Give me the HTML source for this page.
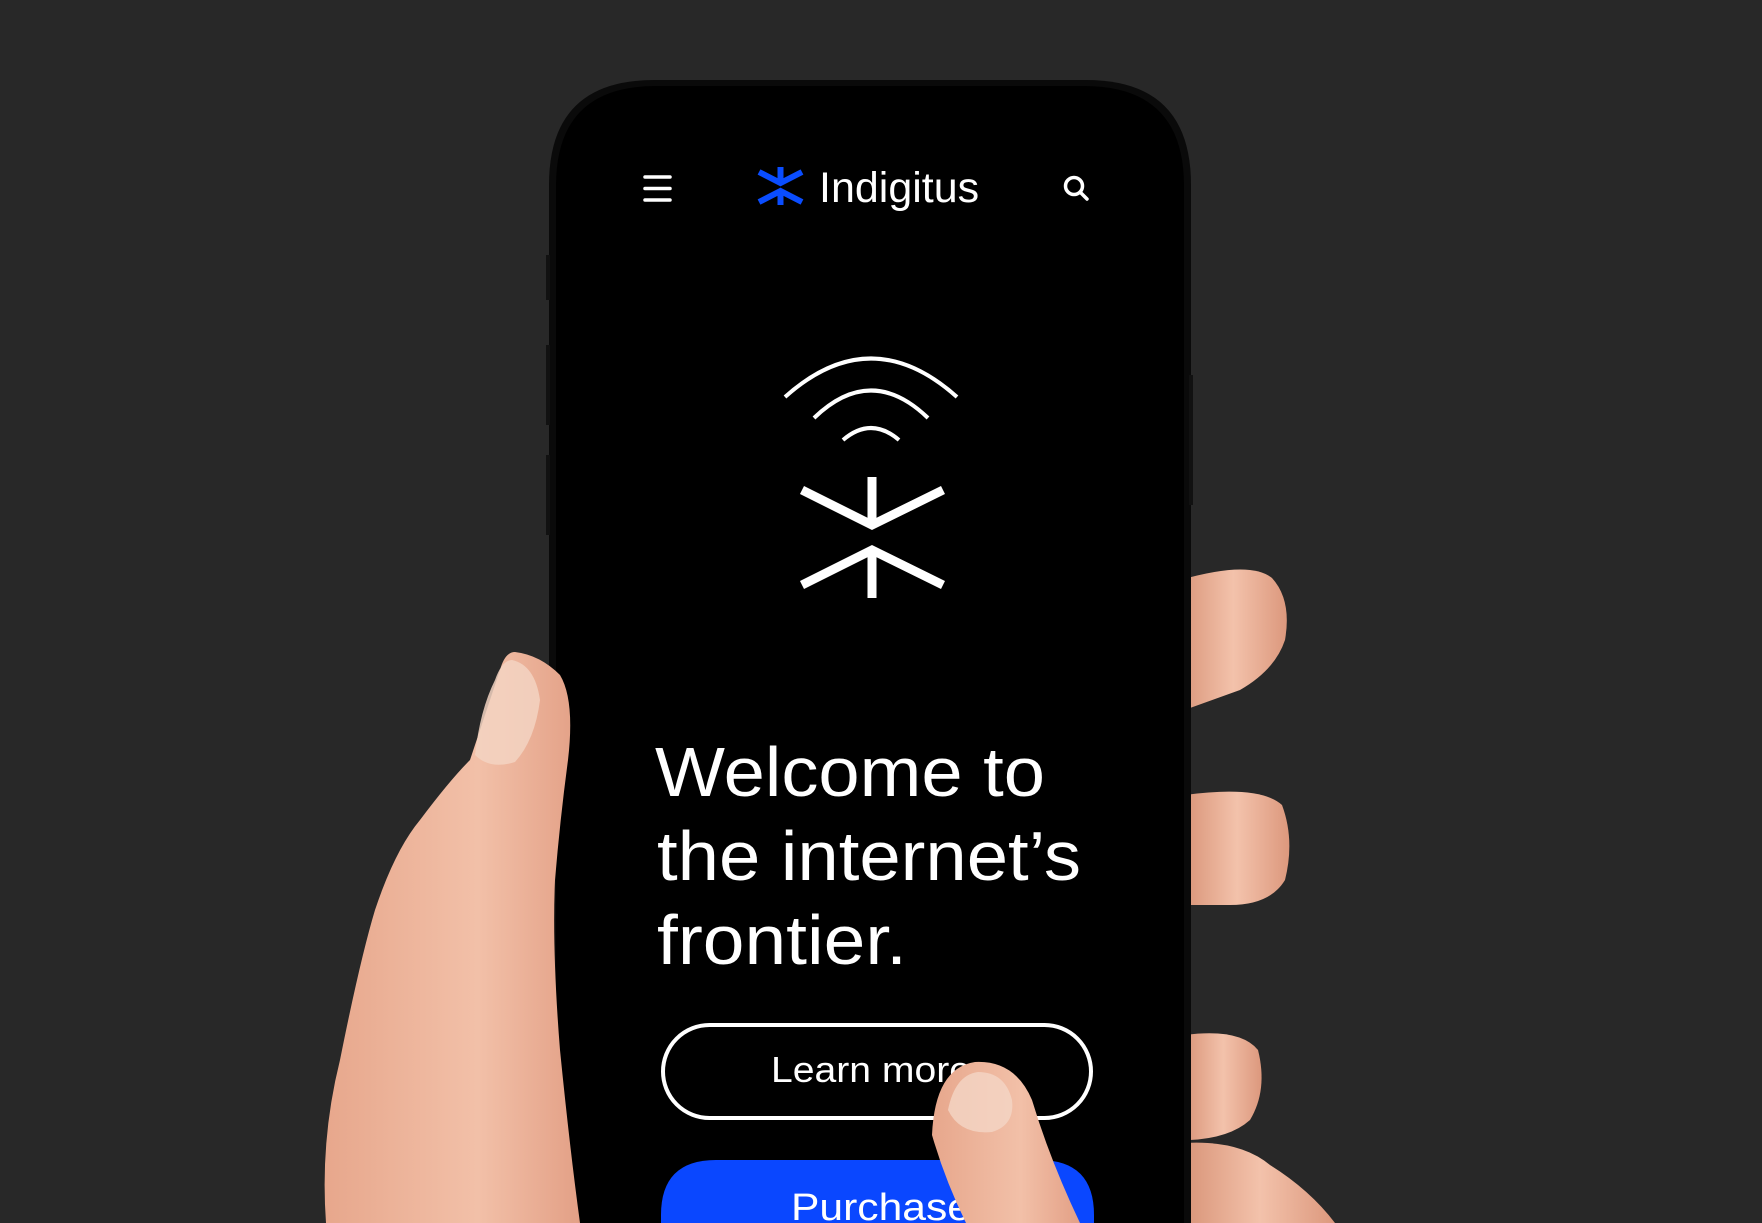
<!DOCTYPE html>
<html><head><meta charset="utf-8"><style>
html,body{margin:0;padding:0;background:#282828;width:1762px;height:1223px;overflow:hidden;font-family:"Liberation Sans",sans-serif}
svg{display:block}
</style></head><body>
<svg width="1762" height="1223" viewBox="0 0 1762 1223" xmlns="http://www.w3.org/2000/svg" style="position:absolute;left:0;top:0">
<defs>
<linearGradient id="sk" x1="0" y1="0" x2="1" y2="0">
<stop offset="0" stop-color="#e7a78c"/><stop offset="0.6" stop-color="#f2c0a8"/><stop offset="1" stop-color="#e3a086"/>
</linearGradient>
<linearGradient id="sk2" x1="0" y1="0" x2="1" y2="0">
<stop offset="0" stop-color="#d99579"/><stop offset="0.5" stop-color="#f3c2ab"/><stop offset="1" stop-color="#dc987d"/>
</linearGradient>
</defs>
<rect width="1762" height="1223" fill="#282828"/>
<path d="M1180 580 Q1250 560 1272 578 Q1292 600 1285 640 Q1275 670 1240 690 L1190 708 Z" fill="url(#sk2)"/>
<path d="M1185 795 Q1260 785 1282 805 Q1295 840 1285 880 Q1270 905 1230 905 L1188 905 Z" fill="url(#sk2)"/>
<path d="M1185 1035 Q1240 1028 1258 1050 Q1268 1090 1250 1120 Q1230 1138 1190 1140 Z" fill="url(#sk2)"/>
<path d="M1185 1143 Q1240 1140 1270 1165 Q1310 1190 1335 1223 L1185 1223 Z" fill="url(#sk2)"/>
<path d="M549 1223 L549 185 Q549 80 654 80 L1086 80 Q1191 80 1191 185 L1191 1223 Z" fill="#0a0a0a"/>
<path d="M556 1223 L556 186 Q556 86 656 86 L1084 86 Q1184 86 1184 186 L1184 1223 Z" fill="#000"/>
<rect x="546" y="255" width="4" height="45" fill="#111"/>
<rect x="546" y="345" width="4" height="80" fill="#111"/>
<rect x="546" y="455" width="4" height="80" fill="#111"/>
<rect x="1189" y="375" width="4" height="130" fill="#111"/>
<g stroke="#fff" stroke-width="3.5" stroke-linecap="round" fill="none">
<line x1="645" y1="177" x2="670" y2="177"/><line x1="645" y1="188.5" x2="670" y2="188.5"/><line x1="645" y1="200" x2="670" y2="200"/>
<circle cx="1074" cy="186" r="8.5"/><line x1="1080.5" y1="192.5" x2="1087" y2="199"/>
</g>
<g stroke="#0a4dff" stroke-width="6" fill="none">
<line x1="780.5" y1="167" x2="780.5" y2="183"/><path d="M759 172 L780.5 183 L802 172"/>
<line x1="780.5" y1="190" x2="780.5" y2="205"/><path d="M759 202 L780.5 191 L802 202"/>
</g>
<text x="819" y="202" fill="#fff" font-size="43" font-family="Liberation Sans, sans-serif">Indigitus</text>
<g stroke="#fff" stroke-width="4" fill="none">
<path d="M785 397 Q871 320 957 397"/>
<path d="M814 418 Q871 363 928 418"/>
<path d="M843 440 Q871 416 899 440"/>
</g>
<g stroke="#fff" stroke-width="9" fill="none">
<line x1="872" y1="477" x2="872" y2="525"/><path d="M802 490 L872 525 L943 490"/>
<line x1="872" y1="550" x2="872" y2="598"/><path d="M802 585 L872 550 L943 585"/>
</g>
<g fill="#fff" font-size="70" font-family="Liberation Sans, sans-serif">
<text x="655" y="796" textLength="390" lengthAdjust="spacingAndGlyphs">Welcome to</text>
<text x="657" y="880" textLength="424" lengthAdjust="spacingAndGlyphs">the internet’s</text>
<text x="657" y="964" textLength="250" lengthAdjust="spacingAndGlyphs">frontier.</text>
</g>
<rect x="663" y="1025" width="428" height="93" rx="46.5" fill="none" stroke="#fff" stroke-width="4"/>
<text x="771" y="1082" fill="#fff" font-size="36" textLength="200" lengthAdjust="spacingAndGlyphs">Learn more</text>
<path d="M661 1223 L661 1215 Q661 1160 716 1160 L1039 1160 Q1094 1160 1094 1215 L1094 1223 Z" fill="#0a47ff"/>
<text x="791" y="1220" fill="#fff" font-size="38" textLength="180" lengthAdjust="spacingAndGlyphs">Purchase</text>
<path d="M932 1135 Q935 1068 975 1062 Q1015 1060 1032 1100 Q1050 1160 1080 1223 L966 1223 Q945 1180 932 1135 Z" fill="url(#sk)"/>
<path d="M948 1110 Q955 1075 978 1072 Q1005 1072 1012 1100 Q1015 1125 992 1132 Q960 1135 948 1110 Z" fill="#f4d6c6" opacity="0.8"/>
<path d="M515 652 Q540 655 560 675 Q575 700 568 760 Q560 820 555 880 Q552 950 560 1050 Q570 1150 580 1223 L326 1223 Q320 1140 340 1060 Q360 960 375 910 Q395 850 420 820 Q450 780 470 760 Q490 700 500 670 Q505 652 515 652 Z" fill="url(#sk)"/>
<path d="M512 660 Q535 665 540 700 Q535 740 515 762 Q490 770 475 755 Q480 710 495 680 Q502 660 512 660 Z" fill="#f3d3c2" opacity="0.85"/>
</svg>
</body></html>
